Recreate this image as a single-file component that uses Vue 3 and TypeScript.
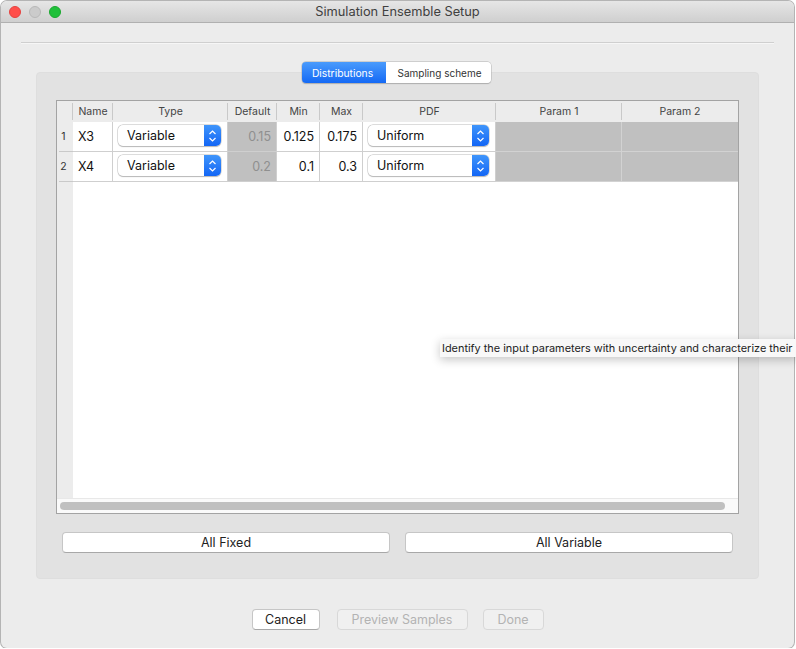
<script setup lang="ts">
interface Row {
  name: string
  type: string
  def: string
  min: string
  max: string
  pdf: string
}

const columns: string[] = ['Name', 'Type', 'Default', 'Min', 'Max', 'PDF', 'Param 1', 'Param 2']

const rows: Row[] = [
  { name: 'X3', type: 'Variable', def: '0.15', min: '0.125', max: '0.175', pdf: 'Uniform' },
  { name: 'X4', type: 'Variable', def: '0.2', min: '0.1', max: '0.3', pdf: 'Uniform' },
]
</script>

<template>
  <div class="window">
    <div class="titlebar">
      <div class="lights">
        <span class="light red" />
        <span class="light gray" />
        <span class="light green" />
      </div>
      <span class="title">Simulation Ensemble Setup</span>
    </div>

    <div class="content">
      <div class="separator" />

      <div class="tab-area">
        <div class="tabs">
          <div class="tab active">Distributions</div>
          <div class="tab">Sampling scheme</div>
        </div>

        <div class="panel">
          <div class="table">
            <div class="grid">
              <div class="head corner" />
              <div v-for="col in columns" :key="col" class="head">{{ col }}</div>

              <template v-for="(row, i) in rows" :key="row.name">
                <div class="row-num"><span class="row-label">{{ i + 1 }}</span></div>
                <div class="cell name">{{ row.name }}</div>
                <div class="cell combo-cell">
                  <div class="combo">
                    <span class="combo-text">{{ row.type }}</span>
                    <span class="combo-arrows">
                      <svg width="9" height="14" viewBox="0 0 9 14">
                        <path d="M1.5 5 L4.5 2 L7.5 5 M1.5 9 L4.5 12 L7.5 9" fill="none" stroke="#fff" stroke-width="1.2" />
                      </svg>
                    </span>
                  </div>
                </div>
                <div class="cell num disabled">{{ row.def }}</div>
                <div class="cell num">{{ row.min }}</div>
                <div class="cell num">{{ row.max }}</div>
                <div class="cell combo-cell">
                  <div class="combo">
                    <span class="combo-text">{{ row.pdf }}</span>
                    <span class="combo-arrows">
                      <svg width="9" height="14" viewBox="0 0 9 14">
                        <path d="M1.5 5 L4.5 2 L7.5 5 M1.5 9 L4.5 12 L7.5 9" fill="none" stroke="#fff" stroke-width="1.2" />
                      </svg>
                    </span>
                  </div>
                </div>
                <div class="cell blank" />
                <div class="cell blank last" />
              </template>
            </div>

            <div class="table-body">
              <div class="num-gutter" />
              <div class="empty" />
            </div>

            <div class="scrollbar">
              <div class="thumb" />
            </div>
          </div>

          <div class="panel-buttons">
            <button class="btn wide">All Fixed</button>
            <button class="btn wide">All Variable</button>
          </div>
        </div>
      </div>

      <div class="footer">
        <button class="btn cancel">Cancel</button>
        <button class="btn preview" disabled>Preview Samples</button>
        <button class="btn done" disabled>Done</button>
      </div>
    </div>

    <div class="tooltip">Identify the input parameters with uncertainty and characterize their</div>
  </div>
</template>

<style>
html,
body {
  margin: 0;
  background: #fff;
  overflow: hidden;
}
</style>

<style scoped>
.window {
  position: relative;
  box-sizing: border-box;
  width: 793px;
  height: 647px;
  margin: 1px 0 0 1px;
  background: #ececec;
  border-radius: 6px;
  box-shadow: 0 0 0 1px #b4b4b4;
  font-family: Inter, "Liberation Sans", sans-serif;
  color: #222;
}

.titlebar {
  position: relative;
  display: flex;
  align-items: center;
  justify-content: center;
  box-sizing: border-box;
  height: 22px;
  background: linear-gradient(#e6e6e6, #cfcfcf);
  border-bottom: 1px solid #b0b0b0;
  border-radius: 6px 6px 0 0;
}

.lights {
  position: absolute;
  left: 8px;
  top: 5px;
  display: flex;
  gap: 8px;
}

.light {
  width: 12px;
  height: 12px;
  border-radius: 50%;
  box-sizing: border-box;
}

.red {
  background: #ff4f4b;
  border: 1px solid #e5423f;
}

.gray {
  background: #cbcbcb;
  border: 1px solid #b8b8b8;
}

.green {
  background: #20c03a;
  border: 1px solid #1aa82f;
}

.title {
  font-size: 12.8px;
  color: #404040;
}

.content {
  display: flex;
  flex-direction: column;
  padding: 19px 20px 0;
}

.separator {
  height: 1px;
  background: #cfcfcf;
  border-bottom: 1px solid #f6f6f6;
}

.tab-area {
  position: relative;
  margin: 28px 15px 0;
}

.tabs {
  position: absolute;
  left: 266px;
  top: -10px;
  display: flex;
  height: 21px;
  z-index: 1;
  border-radius: 4px;
  box-shadow: 0 0 0 0.5px #b5b5b5, 0 0.5px 1px rgba(0, 0, 0, 0.25);
  overflow: hidden;
  font-size: 10px;
}

.tab {
  display: flex;
  align-items: center;
  justify-content: center;
  box-sizing: border-box;
  width: 105px;
  padding-left: 2px;
  background: #fff;
  color: #333;
}

.tab.active {
  width: 84px;
  padding: 0 3px 0 0;
  background: linear-gradient(#4a9bfc, #1469f5);
  color: #fff;
  font-size: 10.3px;
}

.panel {
  box-sizing: border-box;
  height: 507px;
  padding: 27px 19px 0;
  background: #e2e2e2;
  border: 1px solid #dedede;
  border-radius: 4px;
}

.table {
  display: flex;
  flex-direction: column;
  box-sizing: border-box;
  height: 414px;
  background: #fff;
  border: 1px solid #a3a3a3;
}

.grid {
  display: grid;
  grid-template-columns: 16px 40px 115px 49px 43px 43px 133px 126px 1fr;
  grid-template-rows: 21px 30px 30px;
}

.head {
  position: relative;
  display: flex;
  align-items: center;
  justify-content: center;
  background: #ececec;
  font-size: 10.5px;
  color: #444;
}

.head::before {
  content: "";
  position: absolute;
  left: -1px;
  top: 2px;
  bottom: 2px;
  width: 1px;
  background: #c9c9c9;
}

.head.corner::before {
  display: none;
}

.row-num {
  display: flex;
  background: #ececec;
}

.row-label {
  flex: 1;
  display: flex;
  align-items: center;
  justify-content: center;
  margin-left: 2px;
  padding-right: 5px;
  border-bottom: 1px solid #c9c9c9;
  font-size: 10.5px;
  color: #333;
}

.cell {
  display: flex;
  align-items: center;
  box-sizing: border-box;
  border-right: 1px solid #cfcfcf;
  border-bottom: 1px solid #cfcfcf;
  background: #fff;
  font-size: 12.5px;
  color: #111;
}

.cell.name {
  padding-left: 5px;
}

.cell.num {
  justify-content: flex-end;
  padding-right: 5px;
}

.cell.disabled {
  background: #c0c0c0;
  color: #8f8f8f;
}

.cell.blank {
  background: #c0c0c0;
  border-color: #d2d2d2;
}

.cell.last {
  border-right: none;
}

.combo-cell {
  justify-content: flex-start;
  padding-left: 5px;
}

.combo {
  display: flex;
  box-sizing: border-box;
  width: calc(100% - 6px);
  height: 21px;
  margin-bottom: 2px;
  background: #fff;
  border-radius: 5px;
  box-shadow: 0 0 0 0.5px #c0c0c0, 0 0.5px 1px rgba(0, 0, 0, 0.3);
  overflow: hidden;
}

.combo-text {
  flex: 1;
  padding-left: 9px;
  line-height: 21px;
  font-size: 12.5px;
  color: #111;
}

.combo-arrows {
  display: flex;
  align-items: center;
  justify-content: center;
  width: 17px;
  background: linear-gradient(#3f95fb, #1366f5);
}

.table-body {
  flex: 1;
  display: flex;
}

.num-gutter {
  width: 16px;
  background: #ececec;
}

.empty {
  flex: 1;
  background: #fff;
}

.scrollbar {
  display: flex;
  align-items: center;
  height: 15px;
  padding: 0 13px 0 3px;
  background: #fafafa;
  border-top: 1px solid #e8e8e8;
  box-sizing: border-box;
}

.thumb {
  flex: 1;
  height: 8px;
  background: #c0c0c0;
  border-radius: 4px;
}

.panel-buttons {
  display: flex;
  justify-content: space-between;
  margin: 18px 6px 0;
}

.btn {
  box-sizing: border-box;
  height: 21px;
  padding: 0;
  background: #fff;
  border: 1px solid #c6c6c6;
  border-bottom-color: #a8a8a8;
  border-radius: 4px;
  font-family: inherit;
  font-size: 12.5px;
  color: #222;
}

.btn.wide {
  width: 328px;
}

.btn:disabled {
  background: #f0f0f0;
  border-color: #d8d8d8;
  color: #b3b3b3;
}

.footer {
  display: flex;
  justify-content: center;
  gap: 15px;
  margin-top: 30px;
}

.cancel {
  width: 68px;
  margin-right: 2px;
}

.preview {
  width: 131px;
}

.done {
  width: 61px;
}

.tooltip {
  position: absolute;
  left: 438.5px;
  top: 338px;
  width: 358px;
  height: 18px;
  padding-left: 2.5px;
  box-sizing: border-box;
  background: #f8f8f8;
  box-shadow: 0 3px 10px rgba(0, 0, 0, 0.22);
  font-size: 10.9px;
  line-height: 18px;
  white-space: nowrap;
  color: #222;
}
</style>
